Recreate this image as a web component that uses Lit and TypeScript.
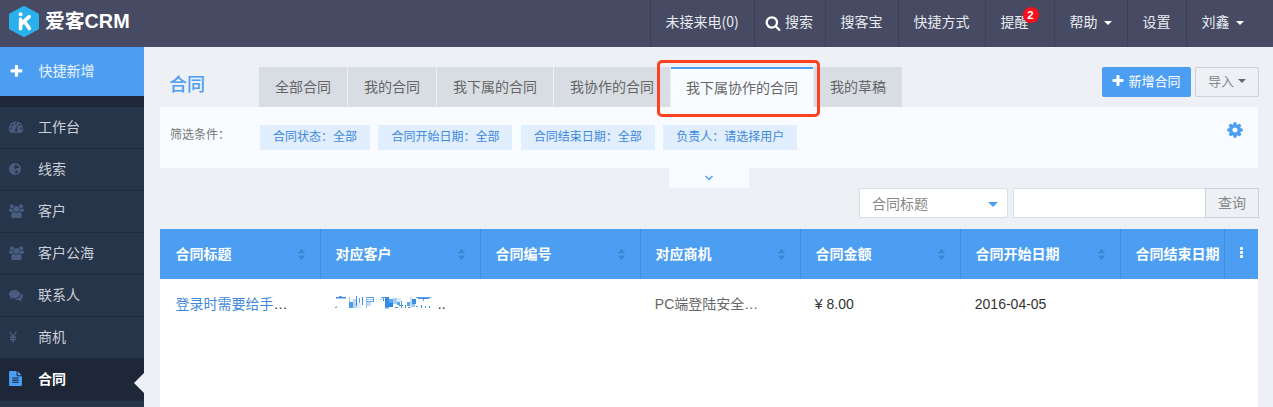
import { LitElement, html, css, svg, nothing } from "lit";
import { customElement, property } from "lit/decorators.js";
import { classMap } from "lit/directives/class-map.js";

const FA: Record<string, string> = {
  plus: "M1600 736v192q0 40-28 68t-68 28h-416v416q0 40-28 68t-68 28h-192q-40 0-68-28t-28-68v-416h-416q-40 0-68-28t-28-68v-192q0-40 28-68t68-28h416v-416q0-40 28-68t68-28h192q40 0 68 28t28 68v416h416q40 0 68 28t28 68z",
  search: "M1216 832q0-185-131.5-316.5t-316.5-131.5-316.5 131.5-131.5 316.5 131.5 316.5 316.5 131.5 316.5-131.5 131.5-316.5zm512 832q0 52-38 90t-90 38q-54 0-90-38l-343-342q-179 124-399 124-143 0-273.5-55.5t-225-150-150-225-55.5-273.5 55.5-273.5 150-225 225-150 273.5-55.5 273.5 55.5 225 150 150 225 55.5 273.5q0 220-124 399l343 343q37 37 37 90z",
  cog: "M1152 896q0-106-75-181t-181-75-181 75-75 181 75 181 181 75 181-75 75-181zm512-109v222q0 12-8 23t-20 13l-185 28q-19 54-39 91 35 50 107 138 10 12 10 25t-9 23q-27 37-99 108t-94 71q-12 0-26-9l-138-108q-44 23-91 38-16 136-29 186-7 28-36 28h-222q-14 0-24.5-8.5t-11.5-21.5l-28-184q-49-16-90-37l-141 107q-10 9-25 9-14 0-25-11-126-114-165-168-7-10-7-23 0-12 8-23 15-21 51-66.5t54-70.5q-27-50-41-99l-183-27q-13-2-21-12.5t-8-23.5v-222q0-12 8-23t19-13l186-28q14-46 39-92-40-57-107-138-10-12-10-24 0-10 9-23 26-36 98.5-107.5t94.5-71.5q13 0 26 10l138 107q44-23 91-38 16-136 29-186 7-28 36-28h222q14 0 24.5 8.5t11.5 21.5l28 184q49 16 90 37l142-107q9-9 24-9 13 0 25 10 129 119 165 170 7 8 7 22 0 12-8 23-15 21-51 66.5t-54 70.5q26 50 41 98l183 28q13 2 21 12.5t8 23.5z",
  file: "M1596 476q14 14 28 36h-472v-472q22 14 36 28zm-476 164h544v1056q0 40-28 68t-68 28h-1344q-40 0-68-28t-28-68v-1600q0-40 28-68t68-28h800v544q0 40 28 68t68 28zm160 736v-64q0-14-9-23t-23-9h-704q-14 0-23 9t-9 23v64q0 14 9 23t23 9h704q14 0 23-9t9-23zm0-256v-64q0-14-9-23t-23-9h-704q-14 0-23 9t-9 23v64q0 14 9 23t23 9h704q14 0 23-9t9-23zm0-256v-64q0-14-9-23t-23-9h-704q-14 0-23 9t-9 23v64q0 14 9 23t23 9h704q14 0 23-9t9-23z",
  comments: "M1408 768q0 139-94 257t-256.5 186.5-353.5 68.5q-86 0-176-16-124 88-278 128-36 9-86 16h-3q-11 0-20.5-8t-11.5-21q-1-3-1-6.5t.5-6.5 2-6l2.5-5 3.5-5.5 4-5 4.5-5 4-4.5q5-6 23-25t26-29.5 22.5-29 25-38.5 20.5-44q-124-72-195-177t-71-224q0-139 94-257t256.5-186.5 353.5-68.5 353.5 68.5 256.5 186.5 94 257zm384 256q0 120-71 224.5t-195 176.5q10 24 20.5 44t25 38.5 22.5 29 26 29.5 23 25q1 1 4 4.5t4.5 5 4 5 3.500 5.500l2.500 5 2 6 .5 6.500-1 6.500q-3 14-13 22t-22 7q-50-7-86-16-154-40-278-128-90 16-176 16-271 0-472-132 58 4 88 4 161 0 309-45t264-129q125-92 192-212t67-254q0-77-23-152 129 71 204 178t75 230z",
};

const DRAWN: Record<string, unknown> = {
  dashboard: svg`<path fill-rule="evenodd" d="M7 1.600a7 7 0 0 1 7 7c0 1.500-.4 2.700-1.100 3.800-.1.2-.3.3-.5.3H1.600c-.2 0-.4-.1-.5-.3A7 7 0 0 1 7 1.600zM2 7.600a1 1 0 1 0 0 2 1 1 0 0 0 0-2zM3.500 4.100a1 1 0 1 0 0 2 1 1 0 0 0 0-2zM7 2.600a1 1 0 1 0 0 2 1 1 0 0 0 0-2zM10.500 4.100a1 1 0 1 0 0 2 1 1 0 0 0 0-2zM12 7.600a1 1 0 1 0 0 2 1 1 0 0 0 0-2zM7.900 5.600 7.100 8.600a1.500 1.500 0 1 0 1 .3l.8-3z"/>`,
  globe: svg`<path fill-rule="evenodd" d="M6 1a6 6 0 1 1 0 12A6 6 0 0 1 6 1zM6.800 2.600 5.600 3.200 6 4 4.800 5.200 5.200 6.300 6.400 7 8.200 6 8.800 6.500 10.200 5.600 9.200 3.800 8 3.800zM6.600 8.600 6.200 10 6.600 11.600 8.200 11 9 9.600 8 8.600z"/>`,
  users: svg`<circle cx="2.900" cy="2.200" r="2"/><circle cx="12.100" cy="2.200" r="2"/><path d="M1.400 4.400c.8.5 2 .5 3 .1-.2 1 0 1.800.4 2.600-.8 0-1.600.3-2.200.8H1.500C.6 7.900 0 7.400 0 6.600c0-1.200.3-2.400 1.400-2.200zM13.600 4.400c-.8.5-2 .5-3 .1.2 1 0 1.800-.4 2.600.8 0 1.600.3 2.200.8h1.100c.9 0 1.500-.5 1.500-1.300 0-1.200-.3-2.400-1.400-2.200z"/><circle cx="7.500" cy="4.900" r="2.900"/><path d="M4.400 7.700c1.900 1.400 4.300 1.400 6.200 0 1.700.2 2.200 2.300 2.200 4 0 1.300-.8 2.300-2 2.300H4.200c-1.200 0-2-1-2-2.300 0-1.700.5-3.800 2.200-4z"/>`,
  yen: svg`<path d="M.7 1.500 4 7 7.300 1.500M4 7v5.800M1 7.200h6M1 9.500h6" fill="none" stroke="currentColor" stroke-width="1.400"/>`,
};

@customElement("crm-icon")
export class CrmIcon extends LitElement {
  @property() name = "plus";
  @property({ type: Number }) size = 14;

  static styles = css`
    :host { display: inline-flex; flex: none; }
    svg { display: block; fill: currentColor; overflow: visible; }
  `;

  render() {
    return FA[this.name]
      ? html`<svg width=${this.size} height=${this.size} viewBox="0 0 1792 1792"><path d=${FA[this.name]}></path></svg>`
      : html`<svg width="15" height="14" viewBox="0 0 15 14">${DRAWN[this.name]}</svg>`;
  }
}

const MENU = [
  { icon: "dashboard", text: "工作台" },
  { icon: "globe", text: "线索" },
  { icon: "users", text: "客户" },
  { icon: "users", text: "客户公海" },
  { icon: "comments", text: "联系人" },
  { icon: "yen", text: "商机" },
  { icon: "file", text: "合同", active: true },
];

const NAV = [
  { text: "未接来电(0)", width: 104 },
  { text: "搜索", width: 71, icon: "search" },
  { text: "搜客宝", width: 73 },
  { text: "快捷方式", width: 87 },
  { text: "提醒", width: 69, badge: "2" },
  { text: "帮助", width: 73, caret: true },
  { text: "设置", width: 59 },
  { text: "刘鑫", width: 87, caret: true },
];

const TABS = ["全部合同", "我的合同", "我下属的合同", "我协作的合同", "我下属协作的合同", "我的草稿"];
const CHIPS = ["合同状态：全部", "合同开始日期：全部", "合同结束日期：全部", "负责人：请选择用户"];
const COLUMNS = ["合同标题", "对应客户", "合同编号", "对应商机", "合同金额", "合同开始日期"];

// Pixelated fragments covering the customer name: x, y, width, height, colour.
const MOSAIC: [number, number, number, number, string][] = [
  [4, 1, 3, 1, "#5fa5ee"], [1, 2, 10, 1.500, "#3e8de0"], [1, 11, 1, 2, "#8dbef2"], [0, 12, 1, 1, "#5b9fe8"],
  [14, 2, 1, 7, "#9cc7f5"], [14, 7, 4, 6, "#4a9be9"], [18, 4, 4, 9, "#b9d7f7"], [21, 1, 1, 10, "#3e8de0"],
  [24, 3, 1, 9, "#5b9fe8"], [22, 8, 4, 5, "#e1effc"], [27, 2, 1, 8, "#3e8de0"],
  [31, 2, 8, 1, "#5b9fe8"], [31, 4, 8, 1, "#9cc7f5"], [31, 6, 8, 1, "#5b9fe8"], [31, 2, 1, 11, "#8dbef2"], [38, 2, 1, 5, "#5b9fe8"], [32, 7, 4, 4, "#c5ddf8"],
  [46, 2, 6, 1, "#5b9fe8"], [45, 4, 2, 1, "#8dbef2"], [48, 3, 1, 3, "#3e8de0"],
  [50, 2, 4, 10, "#338be3"], [54, 4, 4, 4, "#5ba7ed"], [54, 8, 4, 4, "#2485e4"], [58, 3, 4, 6, "#a5cff6"],
  [62, 3, 4, 4, "#d8eafb"], [62, 7, 3, 3, "#5ba7ed"], [60, 12, 3, 1, "#3e8de0"], [50, 12, 4, 1.500, "#5b9fe8"],
  [66, 6, 1, 7, "#5b9fe8"], [64, 10, 4, 1, "#3e8de0"], [70, 10, 1, 3, "#3e8de0"], [72, 7, 4, 4, "#5ba7ed"],
  [75, 2, 2, 11, "#c5ddf8"], [73, 12, 2, 1, "#3e8de0"], [77, 4, 4, 5, "#3b8fe3"], [77, 9, 3, 3, "#94c4f4"],
  [81, 11, 2, 1, "#5b9fe8"], [81, 2, 15, 1, "#5b9fe8"], [83, 3, 11, 1, "#3e8de0"], [88, 4, 1, 2, "#5b9fe8"],
  [86, 10, 1, 3, "#3e8de0"], [90, 11, 1, 2, "#5b9fe8"], [94, 11, 1, 2, "#3e8de0"],
];

@customElement("app-root")
export class AppRoot extends LitElement {
  static styles = css`
    :host {
      display: flex; flex-direction: column; height: 407px; overflow: hidden;
      background: #edf0f5; color: #666; font: 14px/20px "Noto Sans CJK SC", sans-serif;
    }
    * { box-sizing: border-box; }

    .top { display: flex; height: 47px; flex: none; background: #464a62; color: #e8eaf0; }
    .brand { display: flex; align-items: center; padding: 0 0 5px 9px; gap: 6px; flex: 1; }
    .brand-name { font: bold 19.8px/30px "Liberation Sans", "Noto Sans CJK SC", sans-serif; color: #fff; }
    .nav { display: flex; }
    .nav-item { display: flex; align-items: center; padding: 0 0 5px 14.5px; border-left: 1px solid #3d4157; white-space: nowrap; }
    .nav-item crm-icon { color: #fff; margin: 3px 4px 0 -4.5px; }
    .nav-text { position: relative; }
    .badge {
      position: absolute; left: 22px; top: -4px; width: 16px; height: 16px; border-radius: 8px;
      background: #fb0f1c; color: #fff; text-align: center; font: bold 11.5px/16px "Liberation Sans", sans-serif;
    }
    .caret { width: 0; height: 0; border: 4px solid transparent; border-top-color: currentColor; border-bottom: 0; }
    .nav .caret { margin: 4px 0 0 6px; color: #fff; }

    .body { display: flex; flex: 1; min-height: 0; }
    .side { width: 144px; flex: none; background: #27354b; color: #ccd0d6; }
    .quick { display: flex; align-items: center; height: 49px; padding: 0 0 4px 9px; gap: 14.5px; background: #4b9ef1; color: #eaf4fe; }
    .quick crm-icon { color: #fff; margin-top: 3px; }
    .gap { height: 11px; background: #1e2838; }
    .menu { display: grid; grid-template-columns: 29px 1fr auto; align-items: center; height: 42px; padding: 0 0 3px 9px; border-bottom: 1px solid #202c3e; }
    .menu crm-icon { color: #4a5c80; margin-top: 2px; }
    .menu.active { background: #1e2738; color: #fff; font-weight: bold; }
    .menu.active crm-icon { color: #4b9ef1; margin: 1px 0 0 -1px; }
    .pointer { width: 0; height: 0; border: 10px solid transparent; border-right-color: #edf0f5; border-left: 0; margin-top: 10px; }

    .main { flex: 1; min-width: 0; padding: 20px 14px 0 16px; }
    .head { display: flex; height: 40px; }
    .title { width: 99px; padding: 3px 0 0 9px; font: 500 18px/26px "Noto Sans CJK SC", sans-serif; color: #4b9ef1; }
    .tabs { display: flex; gap: 1px; flex: 1; }
    .tab { position: relative; padding: 9px 16px 0; background: #d7dde2; white-space: nowrap; height: 40px; }
    .tab.active { background: #f8fbff; border-top: 2px solid #4b9ef1; padding: 8px 15px 0; }
    .mark { position: absolute; left: -14px; top: -9px; width: 163px; height: 57px; border: 3px solid #fb4120; border-radius: 5px; z-index: 2; }
    .tab:last-child { z-index: 0; }
    .btn { display: flex; align-items: center; height: 30px; font-size: 13px; border-radius: 2px; white-space: nowrap; }
    .add { width: 89px; padding: 0 0 2px 9px; gap: 3.5px; background: #4b9ef1; color: #fff; margin-right: 4px; }
    .import { width: 64px; padding: 0 0 2px 12px; gap: 4px; border: 1px solid #c9d3d8; color: #888; }
    .import .caret { color: #666; }

    .filters { display: flex; height: 61px; width: 1098px; padding: 18px 14px 0 10px; background: #f8fbff; font-size: 12px; }
    .filter-label { width: 90px; color: #777; line-height: 18px; }
    .chips { display: flex; gap: 8.4px; flex: 1; }
    .chip { height: 25px; padding: 0 13px; line-height: 22px; background: #e0eefd; color: #3e88dc; white-space: nowrap; }
    .filters crm-icon { color: #4b9ef1; margin-top: -4px; }
    .toggle { display: flex; align-items: center; justify-content: center; width: 80px; height: 20px; margin-left: 509px; background: #f8fbff; }

    .search { display: flex; justify-content: flex-end; height: 30px; }
    .select { display: flex; align-items: center; justify-content: space-between; width: 149px; padding: 0 9px 0 12px; background: #fff; border: 1px solid #d9dfe6; border-radius: 2px; color: #888; }
    .select .caret { color: #4b9ef1; border-width: 5px 5px 0; margin-top: 2px; }
    .field { width: 192px; margin-left: 5px; background: #fff; border: 1px solid #d9dfe6; border-right: 0; }
    .query { width: 54px; border: 1px solid #c9d3d8; text-align: center; line-height: 27px; color: #888; }

    .table { margin-top: 11px; width: 1098px; height: 190px; background: #fff; }
    .row { display: grid; grid-template-columns: 161px repeat(5, 160px) 104px 33px; }
    .thead { height: 50px; background: #4b9ef1; color: #fff; font-weight: bold; }
    .th { display: flex; align-items: center; justify-content: space-between; padding: 0 14px 2px 14.5px; border-right: 1px solid #3f8edc; white-space: nowrap; overflow: hidden; }
    .th svg { margin-top: 2px; }
    .th:first-child { padding-left: 15.5px; }
    .th.last { padding-right: 0; }
    .more { display: flex; flex-direction: column; align-items: center; justify-content: center; gap: 1px; padding: 0 0 4px 0; }
    .dot { width: 3px; height: 3px; background: #fff; border-radius: 1px; }
    .tbody { font-family: "Liberation Sans", "Noto Sans CJK SC", sans-serif; color: #333; }
    .td { padding: 14px 0 0 13.8px; line-height: 22px; white-space: nowrap; }
    .td:first-child { padding-left: 15.5px; }
    .link { color: #3e88dc; }
    .muted { color: #666; }
    .masked { display: flex; }
  `;

  private sorter() {
    return html`<svg width="9" height="11" viewBox="0 0 9 11" fill="#3c87d2"><path d="M4.500 0 8.500 4.300H.5zM4.500 11 .5 6.700h8z"/></svg>`;
  }

  render() {
    return html`
      <header class="top">
        <div class="brand">
          <svg width="30" height="31" viewBox="0 0 30 31">
            <path d="M15 1 29 8.500v14L15 30 1 22.500v-14z" fill="#2bb0ee" stroke="#2bb0ee" stroke-width="2" stroke-linejoin="round"/>
            <circle cx="11.600" cy="8.200" r="2" fill="#fff"/>
            <path d="M11.600 13.300v9.500M20.200 10.600 12.600 17.600M15.400 15.500 20.400 22.500" fill="none" stroke="#fff" stroke-width="3.600" stroke-linecap="round"/>
          </svg>
          <span class="brand-name">爱客CRM</span>
        </div>
        <nav class="nav">
          ${NAV.map((n) => html`
            <div class="nav-item" style="width:${n.width}px">
              ${n.icon ? html`<crm-icon name=${n.icon} size="16"></crm-icon>` : nothing}
              <span class="nav-text">${n.text}${n.badge ? html`<span class="badge">${n.badge}</span>` : nothing}</span>
              ${n.caret ? html`<i class="caret"></i>` : nothing}
            </div>`)}
        </nav>
      </header>
      <div class="body">
        <aside class="side">
          <div class="quick"><crm-icon name="plus" size="15"></crm-icon><span>快捷新增</span></div>
          <div class="gap"></div>
          ${MENU.map((m) => html`
            <div class=${classMap({ menu: true, active: !!m.active })}>
              <crm-icon name=${m.icon} size=${m.active ? 15 : 14}></crm-icon><span>${m.text}</span>
              ${m.active ? html`<i class="pointer"></i>` : nothing}
            </div>`)}
        </aside>
        <main class="main">
          <div class="head">
            <div class="title">合同</div>
            <div class="tabs">
              ${TABS.map((t, i) => html`
                <div class=${classMap({ tab: true, active: i === 4 })}>${t}${i === 4 ? html`<span class="mark"></span>` : nothing}</div>`)}
            </div>
            <div class="btn add"><crm-icon name="plus" size="14"></crm-icon>新增合同</div>
            <div class="btn import">导入<i class="caret"></i></div>
          </div>
          <div class="filters">
            <span class="filter-label">筛选条件：</span>
            <div class="chips">${CHIPS.map((c) => html`<span class="chip">${c}</span>`)}</div>
            <crm-icon name="cog" size="18"></crm-icon>
          </div>
          <div class="toggle">
            <svg width="10" height="6" viewBox="0 0 10 6"><path d="M1.500 1 5 4.500 8.500 1" fill="none" stroke="#4b9ef1" stroke-width="1.300"/></svg>
          </div>
          <div class="search">
            <div class="select">合同标题<i class="caret"></i></div>
            <div class="field"></div>
            <div class="query">查询</div>
          </div>
          <div class="table">
            <div class="row thead">
              ${COLUMNS.map((c) => html`<div class="th">${c}${this.sorter()}</div>`)}
              <div class="th last">合同结束日期</div>
              <div class="more"><i class="dot"></i><i class="dot"></i><i class="dot"></i></div>
            </div>
            <div class="row tbody">
              <div class="td"><span class="link">登录时需要给手</span>…</div>
              <div class="td masked">
                <svg width="103" height="22" viewBox="0 0 103 22">
                  ${MOSAIC.map(([x, y, w, h, c]) => svg`<rect x=${x} y=${y + 2} width=${w} height=${h} fill=${c}/>`)}
                </svg>
                <span>..</span>
              </div>
              <div class="td"></div>
              <div class="td muted">PC端登陆安全…</div>
              <div class="td">¥ 8.00</div>
              <div class="td">2016-04-05</div>
            </div>
          </div>
        </main>
      </div>
    `;
  }
}
